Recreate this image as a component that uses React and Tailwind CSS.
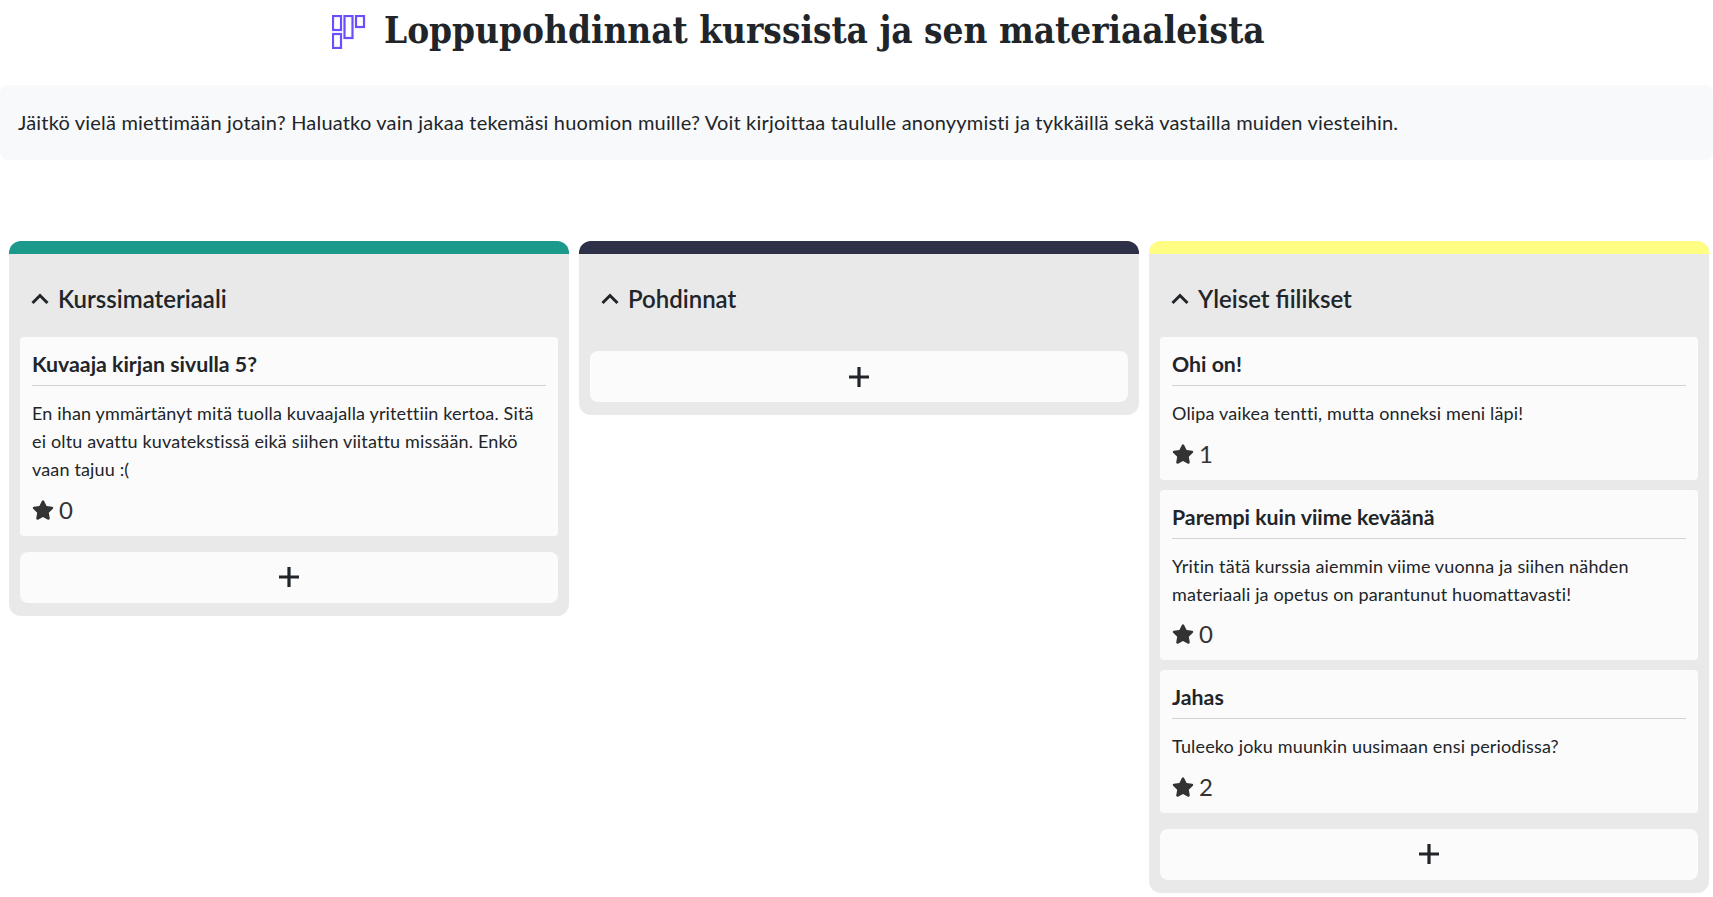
import { FaStar } from 'react-icons/fa';

const columns = [
    {
        title: 'Kurssimateriaali',
        bar: 'bg-[#1b998b]',
        notes: [
            {
                title: 'Kuvaaja kirjan sivulla 5?',
                body: 'En ihan ymmärtänyt mitä tuolla kuvaajalla yritettiin kertoa. Sitä ei oltu avattu kuvatekstissä eikä siihen viitattu missään. Enkö vaan tajuu :(',
                stars: 0,
            },
        ],
    },
    { title: 'Pohdinnat', bar: 'bg-[#2d3047]', notes: [] },
    {
        title: 'Yleiset fiilikset',
        bar: 'bg-[#fffd82]',
        notes: [
            { title: 'Ohi on!', body: 'Olipa vaikea tentti, mutta onneksi meni läpi!', stars: 1 },
            {
                title: 'Parempi kuin viime keväänä',
                body: 'Yritin tätä kurssia aiemmin viime vuonna ja siihen nähden materiaali ja opetus on parantunut huomattavasti!',
                stars: 0,
            },
            { title: 'Jahas', body: 'Tuleeko joku muunkin uusimaan ensi periodissa?', stars: 2 },
        ],
    },
];

function BoardIcon() {
    return (
        <svg width="34" height="34" viewBox="0 0 34 34" fill="none" stroke="#6c4dff" strokeWidth="2.2" className="shrink-0">
            <rect x="1" y="1" width="8" height="14" />
            <rect x="1" y="19" width="8" height="14" />
            <rect x="12.5" y="1" width="8" height="22" />
            <rect x="24" y="1" width="8" height="11" />
        </svg>
    );
}

function Note({ note }) {
    return (
        <div className="bg-[#fbfbfb] rounded-[4px] px-3 pt-[13px] pb-[8px]">
            <h3 className="text-[21.3px] leading-[28px] font-bold text-[#212529] pb-[7px] border-b border-[#d3d3d3]">{note.title}</h3>
            <p className="mt-[13px] text-[18px] tracking-[0.15px] leading-[28px] text-[#212529]">{note.body}</p>
            <div className="mt-[8.6px] flex items-center gap-[5px] text-[24px] leading-[36px] text-[#333333]">
                <FaStar className="w-[22px] h-[22px]" />
                <span>{note.stars}</span>
            </div>
        </div>
    );
}

function Column({ column }) {
    return (
        <div className="bg-[#e9e9e9] rounded-[12px] overflow-hidden pb-[13px]">
            <div className={`h-[13px] ${column.bar}`} />
            <div className="h-[83px] pt-[6px] pl-[22px] flex items-center gap-[9px]">
                <svg width="18" height="18" viewBox="0 0 18 18" fill="none" stroke="#212529" strokeWidth="3" className="shrink-0">
                    <path d="M1.5 13 L9 5.5 L16.5 13" />
                </svg>
                <h2 className="text-[24px] leading-none font-semibold text-[#212529]">{column.title}</h2>
            </div>
            <div className="px-[11px] flex flex-col gap-[10px]">
                {column.notes.map((note) => (
                    <Note key={note.title} note={note} />
                ))}
            </div>
            <div className={`px-[11px] ${column.notes.length ? 'mt-[16px]' : 'mt-[14px]'}`}>
                <button className="w-full h-[51px] bg-[#fbfbfb] rounded-[8px] flex items-center justify-center">
                    <svg width="24" height="24" viewBox="0 0 24 24" fill="none" stroke="#212529" strokeWidth="3.2">
                        <path d="M12 2 V22 M2 12 H22" />
                    </svg>
                </button>
            </div>
        </div>
    );
}

export default function App() {
    return (
        <div className="bg-white min-h-[897px] font-['Lato',sans-serif] overflow-hidden">
            {/* Title */}
            <div className="h-[63px] mb-[22px] pl-[332px] flex items-center gap-[18px]">
                <BoardIcon />
                <h1 className="text-[36.6px] leading-none font-bold text-[#212529] font-['DejaVu_Serif',serif] [font-stretch:condensed] whitespace-nowrap">
                    Loppupohdinnat kurssista ja sen materiaaleista
                </h1>
            </div>

            {/* Intro */}
            <div className="h-[75px] bg-[#f8f9fa] rounded-[8px] pl-[18px] pb-[2px] flex items-center text-[20px] tracking-[0.19px] text-[#212529]">
                Jäitkö vielä miettimään jotain? Haluatko vain jakaa tekemäsi huomion muille? Voit kirjoittaa taululle anonyymisti ja tykkäillä sekä vastailla muiden viesteihin.
            </div>

            {/* Board */}
            <div className="mt-[81px] pl-[9px] pr-[4px] grid grid-cols-[560px_560px_560px] gap-[10px] items-start">
                {columns.map((column) => (
                    <Column key={column.title} column={column} />
                ))}
            </div>
        </div>
    );
}
